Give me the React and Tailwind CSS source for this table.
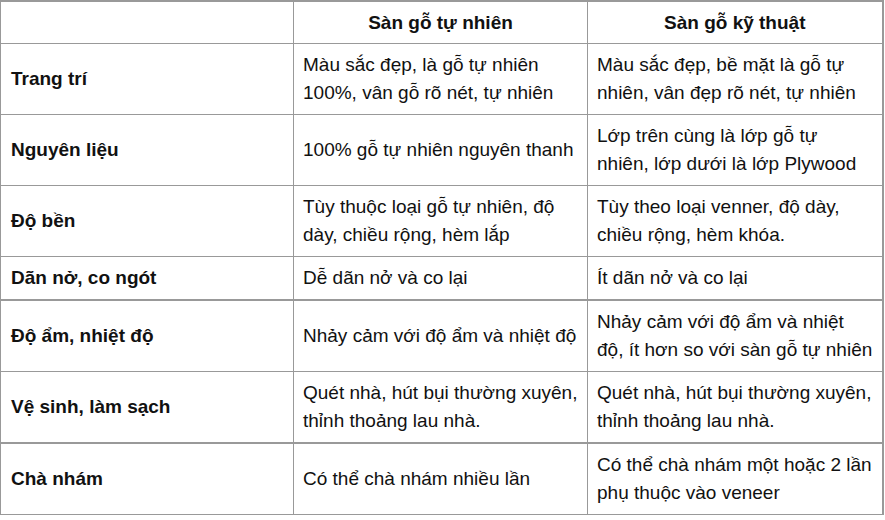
const rows = [
  {
    label: "Trang trí",
    a: ["Màu sắc đẹp, là gỗ tự nhiên", "100%, vân gỗ rõ nét, tự nhiên"],
    b: ["Màu sắc đẹp, bề mặt là gỗ tự", "nhiên, vân đẹp rõ nét, tự nhiên"],
  },
  {
    label: "Nguyên liệu",
    a: ["100% gỗ tự nhiên nguyên thanh"],
    b: ["Lớp trên cùng là lớp gỗ tự", "nhiên, lớp dưới là lớp Plywood"],
  },
  {
    label: "Độ bền",
    a: ["Tùy thuộc loại gỗ tự nhiên, độ", "dày, chiều rộng, hèm lắp"],
    b: ["Tùy theo loại venner, độ dày,", "chiều rộng, hèm khóa."],
  },
  {
    label: "Dãn nở, co ngót",
    a: ["Dễ dãn nở và co lại"],
    b: ["Ít dãn nở và co lại"],
    thick: true,
  },
  {
    label: "Độ ẩm, nhiệt độ",
    a: ["Nhảy cảm với độ ẩm và nhiệt độ"],
    b: ["Nhảy cảm với độ ẩm và nhiệt", "độ, ít hơn so với sàn gỗ tự nhiên"],
  },
  {
    label: "Vệ sinh, làm sạch",
    a: ["Quét nhà, hút bụi thường xuyên,", "thỉnh thoảng lau nhà."],
    b: ["Quét nhà, hút bụi thường xuyên,", "thỉnh thoảng lau nhà."],
    thick: true,
  },
  {
    label: "Chà nhám",
    a: ["Có thể chà nhám nhiều lần"],
    b: ["Có thể chà nhám một hoặc 2 lần", "phụ thuộc vào veneer"],
  },
];

function Lines({ lines }) {
  return lines.map((l, i) => (
    <div key={i} className="whitespace-nowrap">
      {l}
    </div>
  ));
}

export default function App() {
  return (
    <div className="w-[885px] h-[520px] overflow-hidden bg-white font-['Liberation_Sans',Arial,sans-serif] text-[19px] leading-[28px] text-[#111]">
      <table className="w-[882px] table-fixed border-collapse border-t-2 border-r-2 border-l border-[#999]">
        <colgroup>
          <col className="w-[293px]" />
          <col className="w-[294px]" />
          <col className="w-[295px]" />
        </colgroup>
        <thead>
          <tr className="border-b border-[#999]">
            <th className="border-r border-[#999] px-[10px] py-[6.5px]"></th>
            <th className="border-r border-[#999] px-[10px] py-[6.5px] text-center font-bold">
              Sàn gỗ tự nhiên
            </th>
            <th className="px-[10px] py-[6.5px] text-center font-bold">
              Sàn gỗ kỹ thuật
            </th>
          </tr>
        </thead>
        <tbody>
          {rows.map((r) => (
            <tr
              key={r.label}
              className={r.thick ? "border-b-2 border-[#999]" : "border-b border-[#999]"}
            >
              <td className="border-r border-[#999] px-[10px] py-[7px] align-middle font-bold">
                {r.label}
              </td>
              <td className="border-r border-[#999] px-[9px] py-[7px] align-middle">
                <Lines lines={r.a} />
              </td>
              <td className="px-[9px] py-[7px] align-middle">
                <Lines lines={r.b} />
              </td>
            </tr>
          ))}
        </tbody>
      </table>
    </div>
  );
}
